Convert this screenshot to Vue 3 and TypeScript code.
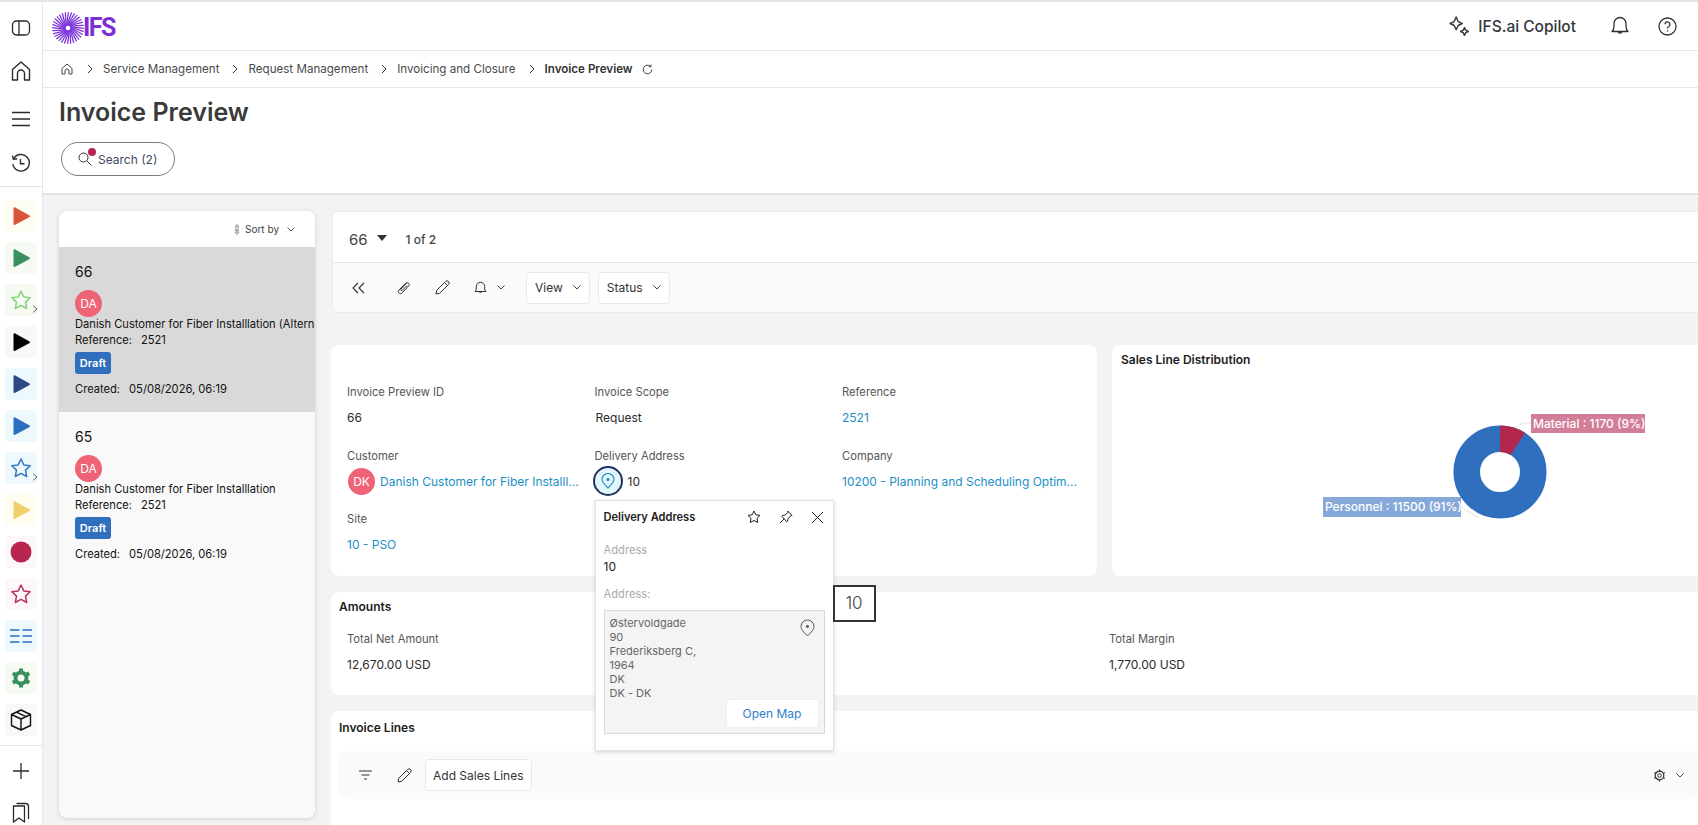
<script setup lang="ts">
// Invoice Preview page: rail, header, list of previews, detail cards.
interface RailTile {
  kind: 'play' | 'star' | 'dot' | 'list' | 'gear' | 'box'
  color: string
  bg: string
  more?: boolean
}

const tiles: RailTile[] = [
  { kind: 'play', color: '#d9553a', bg: '#fefdf3' },
  { kind: 'play', color: '#3a8f5f', bg: '#f5fbf3' },
  { kind: 'star', color: '#86d07e', bg: '#f5fbf3', more: true },
  { kind: 'play', color: '#000000', bg: '#f8f8f8' },
  { kind: 'play', color: '#2b4a85', bg: '#eef9fd' },
  { kind: 'play', color: '#2a6fc0', bg: '#eef9fd' },
  { kind: 'star', color: '#3a78bf', bg: '#eef9fd', more: true },
  { kind: 'play', color: '#f0cf6e', bg: '#fefdf0' },
  { kind: 'dot', color: '#b8264f', bg: '#fef7fa' },
  { kind: 'star', color: '#b8315c', bg: '#fef7fa' },
  { kind: 'list', color: '#2a6fc0', bg: '#eef9fd' },
  { kind: 'gear', color: '#3a8f5f', bg: '#f5fbf3' },
  { kind: 'box', color: '#111111', bg: '#f8f8f8' }
]

const crumbs = ['Service Management', 'Request Management', 'Invoicing and Closure']

const previews = [
  { id: 66, name: 'Danish Customer for Fiber Installlation (Alternate Address)', selected: true },
  { id: 65, name: 'Danish Customer for Fiber Installlation', selected: false }
]

const addressLines = ['Østervoldgade', '90', 'Frederiksberg C,', '1964', 'DK', 'DK - DK']

const amounts = [
  { label: 'Total Net Amount', value: '12,670.00 USD' },
  { label: 'Total Margin', value: '1,770.00 USD' }
]

// swirl of the logo
const rays = Array.from({ length: 32 }, (_, i) => {
  const a = (i / 32) * Math.PI * 2
  const p = (r: number, off: number) => {
    const x = 16 + Math.cos(a + off) * r
    const y = 16 + Math.sin(a + off) * r
    return `${x.toFixed(2)} ${y.toFixed(2)}`
  }
  return `M${p(3, 0)} Q${p(9, 0.3)} ${p(15.5, 0.42)}`
})
</script>

<template>
  <div class="page">
    <aside class="rail">
      <div class="rail__top">
        <svg width="20" height="20" viewBox="0 0 20 20" fill="none" stroke="#2b2b2b" stroke-width="1.3"><rect x="1.5" y="3" width="17" height="14" rx="4" /><path d="M8 3v14" /></svg>
        <svg class="rail__home" width="20" height="22" viewBox="0 0 20 22" fill="none" stroke="#2b2b2b" stroke-width="1.4" stroke-linejoin="round"><path d="M1.5 9.500 10 2l8.500 7.500V20h-5v-6.500a3.500 3.500 0 0 0-7 0V20h-5z" /></svg>
        <svg class="rail__menu" width="20" height="16" viewBox="0 0 20 16" stroke="#2b2b2b" stroke-width="1.3"><path d="M1 1.500h18M1 8h18M1 14.500h18" /></svg>
        <svg class="rail__history" width="20" height="20" viewBox="0 0 20 20" fill="none" stroke="#2b2b2b" stroke-width="1.4"><path d="M2.600 6A8.300 8.300 0 1 1 1.800 11" /><path d="M1.500 2.500 2.400 6.300l3.800-.5" /><path d="M9.500 6v4.800h4" /></svg>
      </div>
      <div class="rail__tiles">
        <div v-for="(t, i) in tiles" :key="i" class="tile" :style="{ background: t.bg }">
          <svg width="22" height="22" viewBox="0 0 22 22" fill="none" :stroke="t.color">
            <path v-if="t.kind === 'play'" d="M3.500 3.500c0-1 .8-1.500 1.700-1l14 7.800c1 .5 1 1.500 0 2l-14 7.500c-.9.500-1.700 0-1.700-1z" :fill="t.color" stroke="none" />
            <path v-else-if="t.kind === 'star'" d="m11 2 2.800 5.900 6.400.8-4.700 4.400 1.200 6.400L11 16.300l-5.700 3.200 1.200-6.400L1.800 8.700l6.400-.8z" stroke-width="1.500" stroke-linejoin="round" />
            <circle v-else-if="t.kind === 'dot'" cx="11" cy="11" r="10.500" :fill="t.color" stroke="none" />
            <path v-else-if="t.kind === 'list'" d="M0 5h9.500M12.500 5H22M0 11h9.500M12.500 11H22M0 17h9.500M12.500 17H22" stroke-width="1.500" />
            <g v-else-if="t.kind === 'gear'">
              <circle cx="11" cy="11" r="5.500" stroke-width="4" />
              <path d="M11 1.500v4M11 16.500v4M2.800 6.300l3.500 2M15.700 13.700l3.500 2M2.800 15.700l3.500-2M15.700 8.300l3.500-2" stroke-width="4" />
            </g>
            <path v-else d="m11 1 9.500 4.500v11L11 21l-9.500-4.500v-11zM1.500 5.500 11 10l9.500-4.500M11 10v11M6.500 3.200l9.500 4.500" stroke-width="1.400" stroke-linejoin="round" />
          </svg>
          <svg v-if="t.more" class="tile__more" width="6" height="8" viewBox="0 0 6 8" fill="none" stroke="#666"><path d="m1 .5 4 3.500-4 3.500" /></svg>
        </div>
      </div>
      <div class="rail__bottom">
        <svg width="18" height="18" viewBox="0 0 18 18" stroke="#2b2b2b" stroke-width="1.300"><path d="M9 1v16M1 9h16" /></svg>
        <svg width="18" height="22" viewBox="0 0 18 22" fill="none" stroke="#2b2b2b" stroke-width="1.300" stroke-linejoin="round"><path d="M1.500 4h11v16l-5.500-4-5.500 4z" /><path d="M4.500 1.500h9a3 3 0 0 1 3 3V17" /></svg>
      </div>
    </aside>

    <div class="shell">
      <header class="topbar">
        <div class="logo">
          <svg width="32" height="32" viewBox="0 0 32 32" fill="none" stroke="#7d35d9" stroke-width="1.300" stroke-linecap="round">
            <path v-for="(d, i) in rays" :key="i" :d="d" />
          </svg>
          <span class="logo__text">IFS</span>
        </div>
        <div class="topbar__right">
          <div class="copilot">
            <svg width="21" height="21" viewBox="0 0 19 19" fill="none" stroke="#33363d" stroke-width="1.300" stroke-linejoin="round"><path d="M6.500 1 8.300 5 12 6.800 8.300 8.600 6.500 12.500 4.700 8.600 1 6.800 4.700 5zM14 10.500l1.100 2.300 2.400 1.200-2.400 1.100-1.100 2.400-1.100-2.400-2.400-1.100 2.400-1.200z" /></svg>
            <span>IFS.ai Copilot</span>
          </div>
          <svg class="topbar__bell" width="18" height="20" viewBox="0 0 18 20" fill="none" stroke="#2f3238" stroke-width="1.300" stroke-linejoin="round"><path d="M1 15.500c1.600-1.300 2-3 2-5.500V7.500a6 6 0 0 1 12 0V10c0 2.500.4 4.200 2 5.500zM6.800 15.500a2.300 2.300 0 0 0 4.400 0" /></svg>
          <svg width="19" height="19" viewBox="0 0 19 19" fill="none" stroke="#2f3238" stroke-width="1.300"><circle cx="9.500" cy="9.500" r="8.500" /><path d="M7 7.300a2.500 2.500 0 1 1 3.800 2.200c-.9.500-1.300 1-1.300 2" /><path d="M9.500 13.300v1.200" /></svg>
        </div>
      </header>

      <nav class="crumbs">
        <svg class="crumbs__home" width="12" height="12" viewBox="0 0 12 12" fill="none" stroke="#444" stroke-linejoin="round"><path d="M1 5.500 6 1l5 4.500V11H8V8a2 2 0 0 0-4 0v3H1z" /></svg>
        <template v-for="c in crumbs" :key="c">
          <svg class="crumbs__sep" width="6" height="10" viewBox="0 0 6 10" fill="none" stroke="#333"><path d="m1 1 4 4-4 4" /></svg>
          <span>{{ c }}</span>
        </template>
        <svg class="crumbs__sep" width="6" height="10" viewBox="0 0 6 10" fill="none" stroke="#333"><path d="m1 1 4 4-4 4" /></svg>
        <strong>Invoice Preview</strong>
        <svg class="crumbs__refresh" width="11" height="11" viewBox="0 0 11 11" fill="none" stroke="#444"><path d="M9.800 5.500A4.300 4.300 0 1 1 8.500 2.400M9 .5v2.300H6.700" /></svg>
      </nav>

      <section class="head">
        <h1>Invoice Preview</h1>
        <button class="search">
          <span class="search__icon">
            <svg width="14" height="14" viewBox="0 0 14 14" fill="none" stroke="#333"><circle cx="5.500" cy="5.500" r="4.500" /><path d="m9 9 4.500 4.500" /></svg>
            <i class="search__dot"></i>
          </span>
          Search (2)
        </button>
      </section>

      <main class="content">
        <section class="list">
          <div class="list__sort">
            <svg width="6" height="11" viewBox="0 0 6 11" fill="none" stroke="#777" stroke-width=".8"><path d="M3 .5 1 3h4zM3 10.500 1 8h4zM1 5h4M1 6.500h4" /></svg>
            <span>Sort by</span>
            <svg class="chev" width="8" height="5" viewBox="0 0 8 5" fill="none" stroke="#555"><path d="m.5.500 3.500 3.500L7.500.500" /></svg>
          </div>
          <article v-for="p in previews" :key="p.id" class="item" :class="{ 'item--on': p.selected }">
            <div class="item__id">{{ p.id }}</div>
            <div class="avatar">DA</div>
            <div class="item__name">{{ p.name }}</div>
            <div class="item__ref"><span>Reference:</span>2521</div>
            <div class="badge">Draft</div>
            <div class="item__ref item__created"><span>Created:</span>05/08/2026, 06:19</div>
          </article>
        </section>

        <section class="detail">
          <div class="record">
            <div class="record__head">
              <span class="record__id">66</span>
              <i class="record__caret"></i>
              <span class="record__count">1 of 2</span>
            </div>
            <div class="record__tools">
              <svg class="tool-back" width="13" height="12" viewBox="0 0 13 12" fill="none" stroke="#333" stroke-width="1.200"><path d="M6 1 1 6l5 5M12 1 7 6l5 5" /></svg>
              <svg class="tool-clip" width="14" height="14" viewBox="0 0 14 14" fill="none" stroke="#333"><path d="M9.500 1.500 2 9c-2 2.500 1 5 3 3l7-7.500c1-1.500-1-3.500-2.500-2.300L4 8c-.8 1 .3 2 1.300 1.300L10 4.500" /></svg>
              <svg class="tool-pen" width="15" height="15" viewBox="0 0 15 15" fill="none" stroke="#333" stroke-linejoin="round"><path d="M1 14l.7-3.700L10.500 1.500a1.800 1.800 0 0 1 3 3L4.700 13.300zM9.500 2.500l3 3" /></svg>
              <svg class="tool-bell" width="13" height="14" viewBox="0 0 13 14" fill="none" stroke="#333" stroke-linejoin="round"><path d="M1 10.500c1-.8 1.300-2 1.300-3.500V5.500a4.200 4.200 0 0 1 8.400 0V7c0 1.500.3 2.700 1.300 3.500zM5 10.500a1.600 1.600 0 0 0 3 0" /></svg>
              <svg class="chev tool-chev" width="8" height="5" viewBox="0 0 8 5" fill="none" stroke="#444"><path d="m.5.500 3.500 3.500L7.500.500" /></svg>
              <button class="tbtn tbtn--view">View<svg class="chev" width="8" height="5" viewBox="0 0 8 5" fill="none" stroke="#444"><path d="m.5.500 3.500 3.500L7.500.500" /></svg></button>
              <button class="tbtn">Status<svg class="chev" width="8" height="5" viewBox="0 0 8 5" fill="none" stroke="#444"><path d="m.5.500 3.500 3.500L7.500.500" /></svg></button>
            </div>
          </div>

          <div class="cards">
            <div class="card fields">
              <div class="field">
                <label>Invoice Preview ID</label>
                <div class="field__value">66</div>
              </div>
              <div class="field">
                <label>Invoice Scope</label>
                <div class="field__value field__value--in">Request</div>
              </div>
              <div class="field">
                <label>Reference</label>
                <div class="field__value"><a>2521</a></div>
              </div>
              <div class="field">
                <label>Customer</label>
                <div class="field__value field__value--row">
                  <div class="avatar">DK</div>
                  <a>Danish Customer for Fiber Installl...</a>
                </div>
              </div>
              <div class="field field--addr">
                <label>Delivery Address</label>
                <div class="field__value field__value--row">
                  <span class="pinbtn">
                    <svg width="14" height="16" viewBox="0 0 14 16" fill="none" stroke="#1b8fc4" stroke-width="1.100"><path d="M7 15C3.500 11.500 1 9 1 6.500a6 6 0 0 1 12 0C13 9 10.500 11.500 7 15z" /><circle cx="7" cy="6.500" r="1" fill="#1b8fc4" /></svg>
                  </span>
                  <span>10</span>
                </div>

                <div class="pop">
                  <div class="pop__head">
                    <b>Delivery Address</b>
                    <div class="pop__icons">
                      <svg width="14" height="14" viewBox="0 0 14 14" fill="none" stroke="#222" stroke-linejoin="round"><path d="m7 1 1.800 3.800 4.200.6-3 2.900.7 4.200L7 10.500l-3.700 2 .7-4.200-3-2.900 4.200-.6z" /></svg>
                      <svg width="14" height="14" viewBox="0 0 14 14" fill="none" stroke="#222" stroke-linejoin="round"><path d="m8.500 1 4.500 4.500-1.200.4-2.800 2.600-.3 2.500-1 .8L3 6.300l.8-1 2.500-.3L8.900 2.200zM5 9l-4 4" /></svg>
                      <svg width="13" height="13" viewBox="0 0 13 13" stroke="#222"><path d="m1 1 11 11M12 1 1 12" /></svg>
                    </div>
                  </div>
                  <div class="pop__label">Address</div>
                  <div class="pop__value">10</div>
                  <div class="pop__label pop__label--second">Address:</div>
                  <div class="pop__box">
                    <div class="pop__address">
                      <div v-for="l in addressLines" :key="l">{{ l }}</div>
                    </div>
                    <svg class="pop__pin" width="15" height="18" viewBox="0 0 15 18" fill="none" stroke="#555"><path d="M7.500 17C3.500 13 1 10.300 1 7.500a6.500 6.500 0 0 1 13 0c0 2.800-2.500 5.500-6.500 9.500z" /><circle cx="7.500" cy="7.500" r="1.100" fill="#555" /></svg>
                    <button class="pop__map">Open Map</button>
                  </div>
                  <div class="pop__tip">10</div>
                </div>
              </div>
              <div class="field">
                <label>Company</label>
                <div class="field__value"><a>10200 - Planning and Scheduling Optim...</a></div>
              </div>
              <div class="field">
                <label>Site</label>
                <div class="field__value"><a>10 - PSO</a></div>
              </div>
            </div>

            <div class="card chart">
              <h3>Sales Line Distribution</h3>
              <svg class="chart__svg" width="570" height="200" viewBox="0 0 570 200">
                <path d="M392 61 L402 56 L410 56" fill="none" stroke="#e2e2e2" />
                <path d="M340 140 L358 151" fill="none" stroke="#e2e2e2" />
                <circle cx="379" cy="105" r="33.250" fill="none" stroke="#2f6fbd" stroke-width="26.500" />
                <circle cx="379" cy="105" r="33.250" fill="none" stroke="#b3274f" stroke-width="26.500" stroke-dasharray="18.800 190.100" transform="rotate(-90 379 105)" />
                <rect x="410" y="47" width="114" height="19" fill="#d37e98" />
                <text x="412" y="61" class="chart__text">Material : 1170 (9%)</text>
                <rect x="202" y="130" width="138" height="20" fill="#86a9da" />
                <text x="204" y="144" class="chart__text">Personnel : 11500 (91%)</text>
              </svg>
            </div>
          </div>

          <div class="card amounts">
            <h3>Amounts</h3>
            <div class="amounts__row">
              <div v-for="a in amounts" :key="a.label" class="field">
                <label>{{ a.label }}</label>
                <div class="field__value">{{ a.value }}</div>
              </div>
            </div>
          </div>

          <div class="card lines">
            <h3>Invoice Lines</h3>
            <div class="lines__tools">
              <svg class="lines__filter" width="13" height="10" viewBox="0 0 13 10" stroke="#333"><path d="M0 1h13M2.500 5h8M5 9h3" /></svg>
              <svg class="lines__pen" width="15" height="15" viewBox="0 0 15 15" fill="none" stroke="#333" stroke-linejoin="round"><path d="M1 14l.7-3.700L10.500 1.500a1.800 1.800 0 0 1 3 3L4.700 13.300zM9.500 2.500l3 3" /></svg>
              <button class="tbtn tbtn--add">Add Sales Lines</button>
              <div class="lines__right">
                <svg width="13" height="13" viewBox="0 0 13 13" fill="none" stroke="#333"><circle cx="6.500" cy="6.500" r="1.800" /><circle cx="6.500" cy="6.500" r="4.300" stroke-width="1.200" /><path d="M6.500.500v1.700M6.500 10.800v1.700M1.300 3.500l1.500.9M10.200 8.600l1.500.9M1.300 9.500l1.500-.9M10.200 4.400l1.500-.9" stroke-width="1.200" /></svg>
                <svg class="chev" width="8" height="5" viewBox="0 0 8 5" fill="none" stroke="#444"><path d="m.5.500 3.500 3.500L7.500.500" /></svg>
              </div>
            </div>
          </div>
        </section>
      </main>
    </div>
  </div>
</template>

<style>
html,
body {
  margin: 0;
  overflow: hidden;
  background: #fff;
}
</style>

<style scoped>
.page {
  display: flex;
  width: 1698px;
  height: 825px;
  overflow: hidden;
  box-sizing: border-box;
  border-top: 2px solid #e4e4e4;
  font-family: Inter, "Noto Sans", sans-serif;
  font-size: 12px;
  color: #222;
  background: #fff;
}
.rail {
  flex: none;
  width: 42px;
  border-right: 1px solid #e6e6e6;
  display: flex;
  flex-direction: column;
  align-items: center;
}
.rail__top {
  height: 185px;
  width: 100%;
  box-sizing: border-box;
  border-bottom: 1px solid #e2e2e2;
  display: flex;
  flex-direction: column;
  align-items: center;
  padding-top: 16px;
}
.rail__home {
  margin-top: 22px;
}
.rail__menu {
  margin-top: 29px;
}
.rail__history {
  margin-top: 26px;
}
.rail__tiles {
  display: flex;
  flex-direction: column;
  gap: 10px;
  padding: 13px 0 9px;
}
.tile {
  position: relative;
  width: 32px;
  height: 32px;
  border-radius: 4px;
  display: flex;
  align-items: center;
  justify-content: center;
}
.tile__more {
  position: absolute;
  right: -1px;
  bottom: 3px;
}
.rail__bottom {
  width: 100%;
  border-top: 1px solid #e2e2e2;
  display: flex;
  flex-direction: column;
  align-items: center;
  gap: 22px;
  padding-top: 16px;
}

.shell {
  flex: 1;
  min-width: 0;
  display: flex;
  flex-direction: column;
}
.topbar {
  flex: none;
  height: 49px;
  box-sizing: border-box;
  border-bottom: 1px solid #e6e6e6;
  display: flex;
  align-items: center;
  justify-content: space-between;
  padding: 0 21px 0 9px;
}
.logo {
  display: flex;
  align-items: center;
  gap: 0;
  margin-top: 3px;
}
.logo__text {
  margin-left: -1px;
  font-family: Roboto, sans-serif;
  font-size: 25px;
  font-weight: 700;
  letter-spacing: -1.500px;
  color: #7d2fd6;
}
.topbar__right {
  display: flex;
  align-items: center;
}
.copilot {
  display: flex;
  align-items: center;
  gap: 8px;
  font-size: 15.500px;
  font-weight: 500;
  color: #33363d;
}
.topbar__bell {
  margin: 0 29px 0 35px;
}

.crumbs {
  flex: none;
  height: 37px;
  box-sizing: border-box;
  border-bottom: 1px solid #e6e6e6;
  display: flex;
  align-items: center;
  padding-left: 18px;
  color: #4a4a4a;
  font-size: 11.600px;
}
.crumbs__home {
  margin-right: 14px;
}
.crumbs__sep {
  margin: 0 10px 0 0;
}
.crumbs span {
  margin-right: 13px;
}
.crumbs strong {
  font-weight: 600;
  color: #333;
}
.crumbs__refresh {
  margin-left: 9px;
}

.head {
  flex: none;
  height: 107px;
  box-sizing: border-box;
  border-bottom: 2px solid #e3e3e3;
  padding: 8px 0 0 16px;
}
h1 {
  margin: 0;
  font-size: 25px;
  line-height: 32px;
  font-weight: 600;
  color: #3a3a3a;
}
.search {
  margin: 14px 0 0 2px;
  width: 114px;
  height: 34px;
  border: 1px solid #7d7d7d;
  border-radius: 17px;
  background: #fff;
  display: flex;
  align-items: center;
  gap: 6px;
  padding: 0 0 0 16px;
  font: 12px Inter, sans-serif;
  color: #3c4a5e;
}
.search__icon {
  position: relative;
  display: flex;
}
.search__dot {
  position: absolute;
  top: -4px;
  right: -4px;
  width: 8px;
  height: 8px;
  border-radius: 50%;
  background: #b8264f;
}

.content {
  flex: 1;
  min-height: 0;
  background: #f3f2f5;
  display: flex;
  align-items: flex-start;
  gap: 16px;
  padding: 16px 0 0 16px;
}
.list {
  flex: none;
  width: 256px;
  height: 607px;
  border-radius: 8px;
  overflow: hidden;
  background: #f9f9fa;
  box-shadow: 0 1px 5px rgba(0, 0, 0, .14);
}
.list__sort {
  height: 36px;
  background: #fff;
  display: flex;
  align-items: center;
  justify-content: flex-end;
  gap: 5px;
  padding-right: 20px;
  font-size: 10px;
  color: #444;
}
.list__sort .chev {
  margin-left: 3px;
}
.item {
  height: 165px;
  box-sizing: border-box;
  padding: 16px 0 0 16px;
  white-space: nowrap;
  overflow: hidden;
  color: #111;
}
.item--on {
  background: #d9d9d9;
}
.item__id {
  font-size: 14px;
  line-height: 18px;
}
.avatar {
  flex: none;
  width: 27px;
  height: 27px;
  margin-top: 9px;
  border-radius: 50%;
  background: #ee6376;
  color: #fff;
  font-size: 12px;
  line-height: 27px;
  text-align: center;
}
.item__name {
  font-size: 11.150px;
  line-height: 15px;
}
.item__ref {
  margin-top: 1px;
  font-size: 11.150px;
  line-height: 15px;
}
.item__ref span {
  margin-right: 9px;
}
.badge {
  width: 36px;
  height: 22px;
  margin-top: 4px;
  border-radius: 3px;
  background: #2f6fbd;
  color: #fff;
  font-size: 11px;
  font-weight: 600;
  line-height: 22px;
  text-align: center;
}
.item__created {
  margin-top: 8px;
}

.detail {
  flex: none;
  width: 1420px;
  display: flex;
  flex-direction: column;
}
.record {
  border-radius: 6px;
  background: #fff;
  border: 1px solid #ebebeb;
  margin-left: 1px;
}
.record__head {
  height: 51px;
  box-sizing: border-box;
  border-bottom: 1px solid #e4e4e4;
  display: flex;
  align-items: center;
  padding: 4px 0 0 16px;
}
.record__id {
  font-size: 15px;
  color: #444;
}
.record__caret {
  margin: -2px 0 0 9px;
  border: 5px solid transparent;
  border-top: 6px solid #333;
  border-bottom: 0;
}
.record__count {
  margin-left: 19px;
  font-size: 12px;
  font-weight: 500;
  color: #444;
}
.record__tools {
  height: 49px;
  box-sizing: border-box;
  display: flex;
  align-items: center;
  background: #fafafa;
  padding-left: 19px;
  border-radius: 0 0 6px 6px;
}
.tool-clip {
  margin-left: 32px;
}
.tool-pen {
  margin-left: 24px;
}
.tool-bell {
  margin-left: 24px;
}
.tool-chev {
  margin-left: 10px;
}
.tbtn {
  height: 32px;
  border: 1px solid #e8e8e8;
  border-radius: 4px;
  background: #fff;
  padding: 0 8px;
  font: 12px Inter, sans-serif;
  color: #333;
  display: flex;
  align-items: center;
  gap: 10px;
  margin-left: 8px;
}
.tbtn--view {
  margin-left: 21px;
}
.cards {
  display: flex;
  gap: 15px;
  margin-top: 32px;
}
.card {
  background: #fff;
  border-radius: 8px;
}
h3 {
  margin: 0;
  font-size: 12px;
  line-height: 15px;
  font-weight: 600;
  color: #1c1c1c;
}
.fields {
  flex: none;
  width: 766px;
  height: 231px;
  box-sizing: border-box;
  padding: 38px 0 0 16px;
  display: grid;
  grid-template-columns: repeat(3, 247.500px);
  grid-auto-rows: 63.500px;
}
.field label {
  display: block;
  margin-top: 1px;
  font-size: 11.200px;
  line-height: 16px;
  color: #555;
}
.field__value {
  display: flex;
  align-items: center;
  height: 27px;
  margin-top: 4px;
  color: #2b2b2b;
  white-space: nowrap;
}
.field__value--in {
  padding-left: 1px;
}
.field__value--row {
  gap: 5px;
}
.field__value--row .avatar {
  margin: 0 0 0 1px;
}
.field__value a {
  color: #1b8fc4;
}
.field--addr {
  position: relative;
  z-index: 2;
}
.pinbtn {
  flex: none;
  width: 30px;
  height: 30px;
  box-sizing: border-box;
  margin-left: -2px;
  border: 2px solid #1a3560;
  border-radius: 50%;
  background: #e3f5fd;
  display: flex;
  align-items: center;
  justify-content: center;
}
.pop {
  position: absolute;
  left: 0;
  top: 53px;
  width: 239px;
  height: 251px;
  box-sizing: border-box;
  padding: 0 8px;
  background: #fff;
  border: 1px solid #e2e2e2;
  box-shadow: 0 1px 4px rgba(0, 0, 0, .16);
}
.pop__head {
  height: 33px;
  display: flex;
  align-items: center;
  justify-content: space-between;
  padding-right: 1px;
}
.pop__head b {
  font-size: 11.100px;
  font-weight: 600;
  color: #1c1c1c;
}
.pop__icons {
  display: flex;
  align-items: center;
  gap: 18px;
}
.pop__label {
  margin-top: 9px;
  font-size: 11.200px;
  line-height: 15px;
  color: #aaa;
}
.pop__label--second {
  margin-top: 12px;
}
.pop__value {
  margin-top: 1px;
  line-height: 16px;
  color: #222;
}
.pop__box {
  position: relative;
  height: 124px;
  box-sizing: border-box;
  margin-top: 8px;
  padding: 5px 5px;
  background: #f4f4f4;
  border: 1px solid #d8d8d8;
  color: #666;
  font-size: 11px;
  line-height: 14px;
}
.pop__pin {
  position: absolute;
  top: 8px;
  right: 9px;
}
.pop__map {
  position: absolute;
  right: 5px;
  bottom: 5px;
  width: 93px;
  height: 29px;
  border: 1px solid #eee;
  border-radius: 3px;
  background: #fff;
  font: 12px Inter, sans-serif;
  color: #2f7fc9;
}
.pop__tip {
  position: absolute;
  left: 237px;
  top: 84px;
  width: 43px;
  height: 37px;
  box-sizing: border-box;
  border: 2px solid #333;
  background: #fff;
  color: #444;
  font-size: 17px;
  font-weight: 300;
  line-height: 33px;
  text-align: center;
}
.chart {
  flex: 1;
  height: 231px;
  box-sizing: border-box;
  padding: 7px 9px;
}
.chart__svg {
  display: block;
}
.chart__text {
  font: 500 12px Inter, sans-serif;
  fill: #fff;
}
.amounts {
  margin-top: 16px;
  height: 103px;
  box-sizing: border-box;
  padding: 7px 8px;
}
.amounts__row {
  display: grid;
  grid-template-columns: 762px 200px;
  padding: 16px 0 0 8px;
}
.lines {
  margin-top: 16px;
  height: 120px;
  box-sizing: border-box;
  padding: 9px 8px;
}
.lines__tools {
  width: 1360px;
  height: 48px;
  margin-top: 16px;
  border-radius: 8px;
  background: #fafafa;
  display: flex;
  align-items: center;
  padding-left: 20px;
  box-sizing: border-box;
}
.lines__pen {
  margin-left: 25px;
}
.lines__tools .tbtn {
  margin-left: 13px;
  padding: 0 7px;
  height: 32px;
}
.lines__right {
  margin-left: auto;
  display: flex;
  align-items: center;
  gap: 10px;
  padding-right: 15px;
}
</style>
